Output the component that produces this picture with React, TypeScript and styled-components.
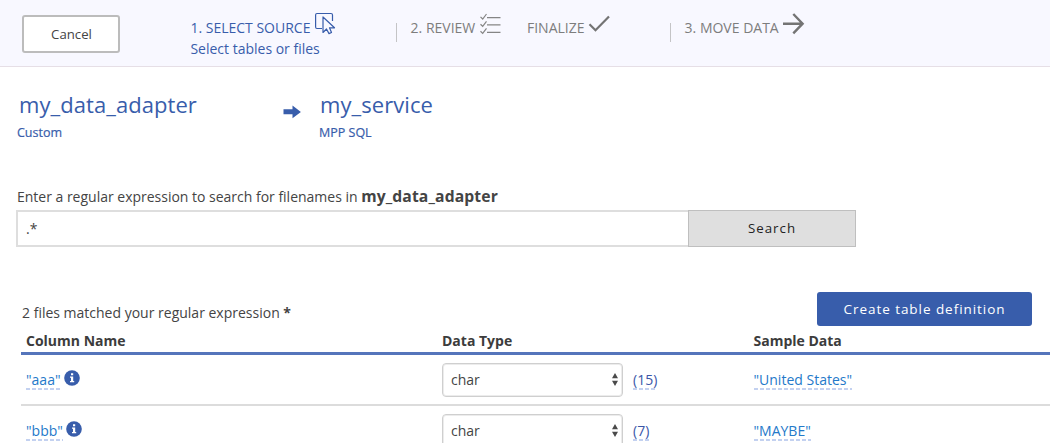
import React from "react";
import styled, { createGlobalStyle } from "styled-components";

const BLUE = "#385dab";

const GlobalStyle = createGlobalStyle`
  *, *::before, *::after { box-sizing: border-box; }
  body {
    margin: 0;
    background: #fff;
    color: #444;
    font: 14px/20px "Open Sans", sans-serif;
    overflow: hidden;
  }
  button, input, select { font: inherit; color: inherit; margin: 0; }
`;

const Page = styled.div`
  height: 443px;
  overflow: hidden;
`;

const Header = styled.header`
  display: flex;
  align-items: flex-start;
  height: 67px;
  padding: 15px 0 0 22px;
  background: #f8f8ff;
  border-bottom: 1px solid #e6dfe6;
`;

const CancelButton = styled.button`
  flex: none;
  width: 98px;
  height: 38px;
  padding: 0 0 0 1px;
  margin-right: 70.4px;
  background: #fff;
  border: 2px solid #bcbcbc;
  border-radius: 3px;
  font-size: 13.2px;
`;

const Step = styled.div<{ $width: number; $active?: boolean }>`
  flex: none;
  width: ${(p) => p.$width}px;
  padding-top: 2px;
  line-height: 21px;
  white-space: nowrap;
  color: ${(p) => (p.$active ? BLUE : "#7d7d7d")};
`;

const StepTitle = styled.div`
  display: flex;
`;

const StepIcon = styled.svg<{ $gap: number }>`
  flex: none;
  margin: -5px 0 0 ${(p) => p.$gap}px;
  overflow: visible;
`;

const Divider = styled.div`
  flex: none;
  width: 1px;
  height: 19px;
  margin: 8px 13.6px 0 0;
  background: #c4c4c6;
`;

const Route = styled.section`
  display: flex;
  height: 119px;
  padding: 22px 0 0 17px;
  color: ${BLUE};
`;

const Endpoint = styled.div<{ $width?: number }>`
  width: ${(p) => (p.$width ? p.$width + "px" : "auto")};
`;

const EndpointName = styled.div<{ $indent: number }>`
  padding-left: ${(p) => p.$indent}px;
  font-size: 22px;
  line-height: 30px;
  letter-spacing: 0.06px;
`;

const EndpointKind = styled.div`
  margin-top: 4px;
  font-size: 12.5px;
  -webkit-text-stroke: 0.2px ${BLUE};
`;

const RouteArrow = styled.svg`
  flex: none;
  margin: 16px 18px 0 0;
`;

const SearchForm = styled.section`
  height: 106px;
  padding-left: 16px;
`;

const SearchLabel = styled.label`
  display: block;
  height: 24px;
  padding-left: 1px;
  white-space: nowrap;
  letter-spacing: -0.01px;

  b {
    font-size: 15.7px;
    font-weight: 700;
    letter-spacing: 0.12px;
  }
`;

const SearchBar = styled.div`
  display: flex;
  width: 840px;
  height: 37px;
`;

const SearchInput = styled.input`
  width: 672px;
  padding: 0 8px;
  border: 2px solid #dedede;
  border-right: 0;
  outline: 0;
`;

const SearchButton = styled.button`
  width: 168px;
  padding: 0 0 1px;
  background: #dfdfdf;
  border: 1px solid #bfbfbf;
  color: #222;
  font-size: 13.3px;
  letter-spacing: 1px;
`;

const ResultBar = styled.div`
  display: flex;
  justify-content: space-between;
  height: 39px;
  padding: 0 18px 0 22px;
`;

const ResultText = styled.div`
  padding-top: 11px;
  white-space: nowrap;
`;

const CreateButton = styled.button`
  width: 215px;
  height: 34px;
  padding: 0;
  background: ${BLUE};
  border: 0;
  border-radius: 3px;
  color: #fff;
  font-size: 13.5px;
  letter-spacing: 0.95px;
`;

const Table = styled.div`
  margin-left: 21px;
`;

const Row = styled.div`
  display: grid;
  grid-template-columns: 421px 311.5px 1fr;
  align-items: center;
  height: 51px;
  border-bottom: 2px solid #dcdcdc;
`;

const HeadRow = styled(Row)`
  align-items: start;
  height: 24px;
  border-bottom: 3px solid #5575bb;
  font-weight: 700;
  color: #3c3c3c;
`;

const Cell = styled.div<{ $indent?: number }>`
  display: flex;
  align-items: center;
  padding-left: ${(p) => p.$indent ?? 0}px;
`;

const Editable = styled.span<{ $dark?: boolean }>`
  height: 19px;
  line-height: 18px;
  margin-top: 1px;
  color: ${(p) => (p.$dark ? "#3a56a8" : "#2479c9")};
  background: repeating-linear-gradient(90deg, #c3d1f0 0 4px, transparent 4px 6px) left bottom / 100% 2px no-repeat;
`;

const InfoIcon = styled.svg`
  margin: -4px 0 0 3.300px;
`;

const SelectBox = styled.div`
  display: flex;
  align-items: center;
  width: 181px;
  height: 34px;
  margin-right: 10px;
  padding-right: 4px;
  border: 1px solid #cfcfcf;
  box-shadow: inset 0 0 0 1px #ececec;
  border-radius: 4px;
`;

const Select = styled.select`
  flex: 1;
  appearance: none;
  padding: 0 0 0 8px;
  border: 0;
  background: transparent;
  outline: 0;
`;

const rows = [
  { name: '"aaa"', type: "char", size: "(15)", sample: '"United States"' },
  { name: '"bbb"', type: "char", size: "(7)", sample: '"MAYBE"' },
];

export default function App() {
  return (
    <Page>
      <GlobalStyle />
      <Header>
        <CancelButton>Cancel</CancelButton>
        <Step $width={205.6} $active>
          <StepTitle>
            1. SELECT SOURCE
            <StepIcon $gap={4.500} width="21" height="22" viewBox="0 0 21 22" fill="none" stroke={BLUE} strokeWidth="1.2">
              <path d="M7 16.500H2Q0.600 16.500 0.600 15V3Q0.600 1.500 2 1.500H16Q17.500 1.500 17.500 3V9" />
              <path d="M8 5V20.500L11.500 17L14 21.600L16.500 20.500L14.500 15.800H19.500Z" strokeLinejoin="round" />
            </StepIcon>
          </StepTitle>
          <div>Select tables or files</div>
        </Step>
        <Divider />
        <Step $width={116.4}>
          <StepTitle>
            2. REVIEW
            <StepIcon $gap={5} width="21" height="22" viewBox="0 0 21 22" fill="none" stroke="#858585" strokeWidth="1.2">
              <path d="M7 5.700H20.500M7 12.900H20.500M7 20.300H20.500" />
              <path d="M0.500 4.900L2.700 7L6.500 2M0.500 12.200L2.700 14.300L6.500 9.300M0.500 19.300L2.700 21.400L6.500 16.400" />
            </StepIcon>
          </StepTitle>
        </Step>
        <Step $width={143}>
          <StepTitle>
            FINALIZE
            <StepIcon $gap={4} width="21" height="22" viewBox="0 0 21 22" fill="none" stroke="#747474" strokeWidth="2.2">
              <path d="M0.500 12.200L6.500 18.300L20 4.500" />
            </StepIcon>
          </StepTitle>
        </Step>
        <Divider />
        <Step $width={130}>
          <StepTitle>
            3. MOVE DATA
            <StepIcon $gap={4} width="21" height="22" viewBox="0 0 21 22" fill="none" stroke="#747474" strokeWidth="2.4">
              <path d="M0 11.700H19.500M10.300 2L19.600 11.700L10.300 21.300" />
            </StepIcon>
          </StepTitle>
        </Step>
      </Header>

      <Route>
        <Endpoint $width={266}>
          <EndpointName $indent={2}>my_data_adapter</EndpointName>
          <EndpointKind>Custom</EndpointKind>
        </Endpoint>
        <RouteArrow width="18" height="14" viewBox="0 0 18 14" fill={BLUE}>
          <path d="M0.500 4.300H9.500V0.500L17.900 7L9.500 13.200V9.300H0.500Z" />
        </RouteArrow>
        <Endpoint>
          <EndpointName $indent={1}>my_service</EndpointName>
          <EndpointKind>MPP SQL</EndpointKind>
        </Endpoint>
      </Route>

      <SearchForm>
        <SearchLabel htmlFor="pattern">
          Enter a regular expression to search for filenames in <b>my_data_adapter</b>
        </SearchLabel>
        <SearchBar>
          <SearchInput id="pattern" defaultValue=".*" />
          <SearchButton>Search</SearchButton>
        </SearchBar>
      </SearchForm>

      <ResultBar>
        <ResultText>
          2 files matched your regular expression <b>*</b>
        </ResultText>
        <CreateButton>Create table definition</CreateButton>
      </ResultBar>

      <Table>
        <HeadRow>
          <Cell $indent={5}>Column Name</Cell>
          <Cell>Data Type</Cell>
          <Cell>Sample Data</Cell>
        </HeadRow>
        {rows.map((row) => (
          <Row key={row.name}>
            <Cell $indent={5}>
              <Editable>{row.name}</Editable>
              <InfoIcon width="16" height="16" viewBox="0 0 16 16">
                <circle cx="8" cy="8" r="7.800" fill={BLUE} />
                <path d="M7 3.200H9.200V5.200H7ZM6 6.500H9.200V11H10.200V12.300H6V11H7V7.800H6Z" fill="#fff" />
              </InfoIcon>
            </Cell>
            <Cell>
              <SelectBox>
                <Select defaultValue={row.type}>
                  <option>{row.type}</option>
                </Select>
                <svg width="6" height="13" viewBox="0 0 6 13" fill="#4a4a4a">
                  <path d="M3 0L6 5.300H0ZM0 7.700H6L3 13Z" />
                </svg>
              </SelectBox>
              <Editable $dark>{row.size}</Editable>
            </Cell>
            <Cell>
              <Editable>{row.sample}</Editable>
            </Cell>
          </Row>
        ))}
      </Table>
    </Page>
  );
}
